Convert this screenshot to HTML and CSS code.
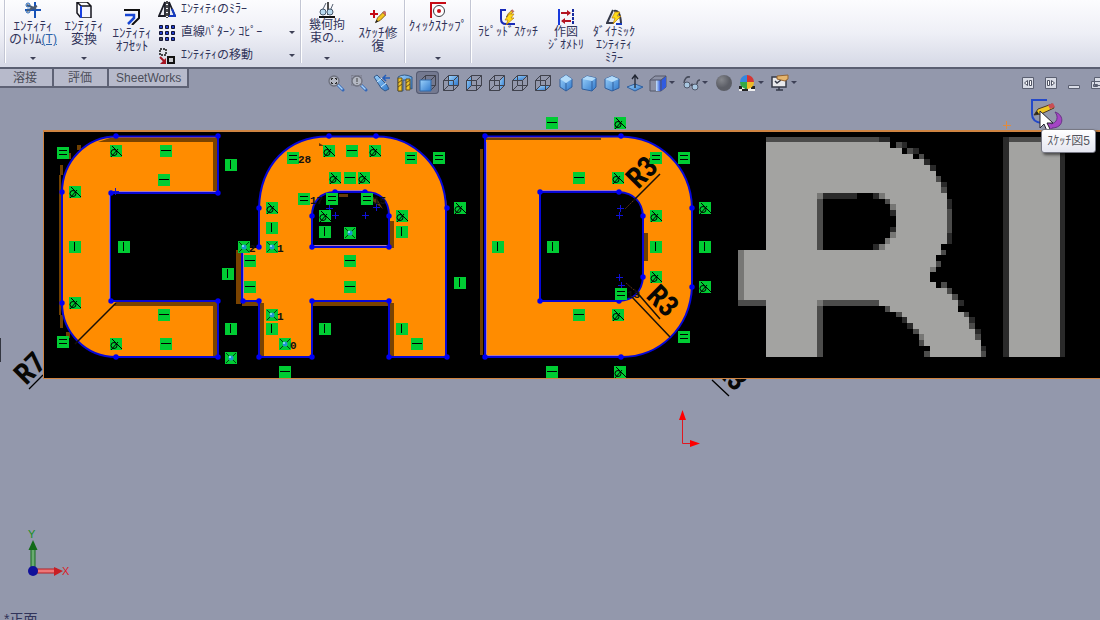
FILE: index.html
```html
<!DOCTYPE html>
<html lang="ja">
<head>
<meta charset="utf-8">
<title>スケッチ</title>
<link rel="stylesheet" href="styles.css">
</head>
<body>
<svg class="defs" aria-hidden="true">
  <defs>
    <linearGradient id="blue" x1="0" y1="0" x2="1" y2="1"><stop offset="0" stop-color="#9cd2fb"/><stop offset="1" stop-color="#2f78cc"/></linearGradient>
    <linearGradient id="shine" x1="0" x2="1"><stop offset="0" stop-color="#c8e4fb"/><stop offset="1" stop-color="#1c48d8"/></linearGradient>
    <radialGradient id="ball" cx=".35" cy=".3"><stop offset="0" stop-color="#85878d"/><stop offset="1" stop-color="#5c5e66"/></radialGradient>
    <symbol id="wire" viewBox="0 0 18 18"><path d="M1.500 6.500h10v10h-10zM6.500 1.500h10v10h-10zM1.500 6.500l5-5M11.500 6.500l5-5M1.500 16.500l5-5M11.500 16.500l5-5" fill="none" stroke="#40424d"/></symbol>
    <symbol id="lens" viewBox="0 0 18 18"><path d="M11 11l5 5" stroke="#3568b8" stroke-width="3" stroke-linecap="round"/><path d="M11 11l4 4" stroke="#a9d4fa" stroke-width="1.500" stroke-linecap="round"/><circle cx="7" cy="7" r="5" fill="#b4b8c3" stroke="#6c6f7c" stroke-width="1.300"/></symbol>
    <symbol id="pencil" viewBox="0 0 16 16"><path d="M2 14l2-5 7-7 3 3-7 7z" fill="#f4c61c" stroke="#71501c"/><path d="M10 3l2-2 3 3-2 2z" fill="#d66b63" stroke="#7b3433" stroke-width=".5"/><path d="M1 15l2-4 2 2z" fill="#222"/></symbol>
    <g id="h"><path d="M-6-6H6V6H-6z" fill="#00cc33"/><path d="M-5-.5H5" stroke="#000"/></g>
    <g id="v"><path d="M-6-6H6V6H-6z" fill="#00cc33"/><path d="M-.5-5V4" stroke="#000"/></g>
    <g id="e"><path d="M-6-6H6V6H-6z" fill="#00cc33"/><path d="M-4-2.500H4M-4 1.500H4" stroke="#000"/></g>
    <g id="t"><path d="M-6-6H6V6H-6z" fill="#00cc33"/><circle cx="-2" cy="1.500" r="3" fill="none" stroke="#000"/><path d="M-4-5L6 5M-5 6L2-2" stroke="#000"/></g>
    <g id="c"><path d="M-6-6H6V6H-6z" fill="#00cc33"/><path d="M-5-5L5 5M5-5L-5 5" stroke="#043b16"/><circle r="2.500" fill="#2094d2"/><circle cx="-1" cy="-1" r="1" fill="#9de6ff"/></g>
    <path id="x" d="M-3 .5H4M.5-3V4" stroke="#1010d8"/>
    <circle id="p" r="2.700" fill="#0000f4"/>
  </defs>
</svg>

<header class="ribbon">
  <i class="rule"></i>
  <button class="tool menu trim large"><svg viewBox="0 0 16 16"><path d="M0 8h16M10 0v16" stroke="#1752b8" stroke-width="2"/><path d="M2 3l9 4M2 9l10-5" stroke="#4b5a70" stroke-width="2"/><circle cx="3" cy="3" r="2" fill="none" stroke="#2364b5"/><circle cx="3" cy="9" r="2" fill="none" stroke="#2364b5"/></svg><span>ｴﾝﾃｨﾃｨ<br>のﾄﾘﾑ<u>(T)</u></span><b class="arrow"></b></button>
  <button class="tool menu large"><svg viewBox="0 0 16 16"><path d="M5 4h10v12H5z" fill="#f3f4ff"/><path d="M1 0h10l4 4v12H5L1 11zM1 0l4 4h10M5 4v12" fill="none" stroke="#15151c" stroke-width="1.500"/><path d="M5 4v12" stroke="#173ee0" stroke-width="2"/></svg><span>ｴﾝﾃｨﾃｨ<br>変換</span><b class="arrow"></b></button>
  <button class="tool large"><svg viewBox="0 0 16 16"><path d="M0 1h15v8l-7 7" fill="none" stroke="#111" stroke-width="2"/><path d="M1 6h9v3l-6 6" fill="none" stroke="#1746d4" stroke-width="2.500"/></svg><span>ｴﾝﾃｨﾃｨ<br>ｵﾌｾｯﾄ</span></button>
  <div class="list">
    <button class="row"><svg viewBox="0 0 18 18"><path d="M7 1L1 15h6zM11 1l6 14h-6z" fill="#e8eaf2" stroke="#1a1c26" stroke-width="1.800"/><path d="M11 15h6L14 8" fill="none" stroke="#153ac1" stroke-width="2"/><path d="M9 0v17" stroke="#111" stroke-width="1.500" stroke-dasharray="3 1"/></svg><span>ｴﾝﾃｨﾃｨのﾐﾗｰ</span></button>
    <button class="row"><svg viewBox="0 0 18 18"><g fill="#223dce" stroke="#111536"><path d="M1.500 1.500h3v3h-3zM7.500 1.500h3v3h-3zM13.500 1.500h3v3h-3zM1.500 7.500h3v3h-3zM7.500 7.500h3v3h-3zM13.500 7.500h3v3h-3zM7.500 13.500h3v3h-3zM13.500 13.500h3v3h-3z"/><path fill="#444" d="M1.500 13.500h3v3h-3z"/></g></svg><span>直線ﾊﾟﾀｰﾝ ｺﾋﾟｰ</span><b class="arrow"></b></button>
    <button class="row"><svg viewBox="0 0 18 18"><path d="M2 2h6v6H2z" fill="none" stroke="#111" stroke-width="1.500" stroke-dasharray="2 1"/><path d="M10 10h6v6h-6z" fill="#c9c9ce" stroke="#111" stroke-width="2"/><path d="M2 10l4 4" stroke="#a41522" stroke-width="2"/><path d="M8 11v6H2z" fill="#a41522"/></svg><span>ｴﾝﾃｨﾃｨの移動</span><b class="arrow"></b></button>
  </div>
  <i class="rule"></i>
  <button class="tool menu relations"><svg viewBox="0 0 16 16"><path d="M0 15h16" stroke="#111" stroke-width="2"/><path d="M9 0v13" stroke="#111" stroke-width="1.500"/><path d="M3 9l4-8M11 9l3-7" stroke="#555f70" fill="none"/><circle cx="4" cy="10" r="3" fill="#b9d9ef" stroke="#45566a"/><circle cx="11" cy="10" r="3" fill="#b9d9ef" stroke="#45566a"/></svg><span>幾何拘<br>束の...</span><b class="arrow"></b></button>
  <button class="tool repair large"><svg viewBox="0 0 16 16"><path d="M0 5h8M4 1v8" stroke="#c40915" stroke-width="2"/><use href="#pencil" x="4" y="0" width="14" height="16"/></svg><span>ｽｹｯﾁ修<br>復</span></button>
  <i class="rule"></i>
  <button class="tool menu snap large"><svg viewBox="0 0 16 16"><path d="M1 16V1h15" fill="none" stroke="#c60b16" stroke-width="2"/><circle cx="9" cy="9" r="5.500" fill="#fff" stroke="#3d3d46"/><circle cx="9" cy="9" r="2" fill="#c60b16"/></svg><span>ｸｨｯｸｽﾅｯﾌﾟ</span><b class="arrow"></b></button>
  <i class="rule"></i>
  <button class="tool rapid"><svg viewBox="0 0 16 16"><path d="M6 1H1v9q0 5 5 5h9" fill="none" stroke="#1829b8" stroke-width="2"/><use href="#pencil" x="4" y="0" width="12" height="9"/><path d="M9 5h5l-3 4h3l-8 7 2-5H5z" fill="#ffda19" stroke="#b87c08" stroke-width=".7"/></svg><span>ﾗﾋﾟｯﾄﾞｽｹｯﾁ</span></button>
  <button class="tool geometry"><svg viewBox="0 0 16 16"><path d="M1 0v16" stroke="#1839dc" stroke-width="2"/><path d="M15 0v16" stroke="#172ba0" stroke-width="2" stroke-dasharray="3 1"/><path d="M3 4h9M4 12h9" stroke="#b31320" stroke-width="2"/><path d="M9 1l4 3-4 3zM7 9l-4 3 4 3z" fill="#b31320"/></svg><span>作図<br>ｼﾞｵﾒﾄﾘ</span></button>
  <button class="tool dynamic"><svg viewBox="0 0 16 16"><path d="M7 1L1 14h7M8 2q6-2 7 12" fill="#e6e7ef" stroke="#343848" stroke-width="2"/><path d="M10 15h6" stroke="#163ac0" stroke-width="2"/><path d="M9 3h5l-3 4h4l-8 8 2-6H6z" fill="#ffdc19" stroke="#b87c08" stroke-width=".7"/></svg><span>ﾀﾞｲﾅﾐｯｸ<br>ｴﾝﾃｨﾃｨ<br>ﾐﾗｰ</span></button>
</header>

<div class="bar">
  <nav class="tabs"><a href="#weld">溶接</a><a href="#evaluate">評価</a><a href="#sheetworks">SheetWorks</a></nav>
  <div class="views">
    <button aria-label="全体表示"><svg viewBox="0 0 18 18"><use href="#lens"/><path d="M4.500 6V4.500H6M8 4.500h1.500V6M9.500 8v1.500H8M6 9.500H4.500V8" fill="none" stroke="#222"/></svg></button>
    <button aria-label="一部拡大"><svg viewBox="0 0 18 18"><use href="#lens"/><path d="M1.500 1.500h10v10h-10z" fill="none" stroke="#7a7d8c" stroke-dasharray="2 1"/><path d="M7 4v4M7 9v1" stroke="#444"/></svg></button>
    <button aria-label="前のビュー"><svg viewBox="0 0 18 18"><path d="M1 3l3-2 10 10 2 4-4 2-4-3z" fill="url(#blue)" stroke="#335889"/><path d="M4 8l5-4M8 13l5-4" stroke="#d0eaff"/><path d="M17 4h-6M13 1l-3 3 3 3" stroke="#245eba" fill="none" stroke-width="1.500"/></svg></button>
    <button aria-label="断面表示"><svg viewBox="0 0 18 18"><path d="M2 3q6-4 14 0v12l-4-2V6H7v11H2z" fill="url(#blue)" stroke="#315985"/><path d="M2 4h4v13H2zM10 5h4v11h-4z" fill="#efc52a" stroke="#68501c"/><path d="M2 9l4-3M2 13l4-3M10 9l4-3M10 13l4-3" stroke="#68501c"/></svg></button>
    <button class="on" aria-label="正面"><svg viewBox="0 0 18 18"><use href="#wire"/><path d="M1 6h11v11H1z" fill="url(#blue)" stroke="#326baa"/></svg></button>
    <button aria-label="背面"><svg viewBox="0 0 18 18"><path d="M7 2h9v9H7z" fill="url(#blue)"/><use href="#wire"/></svg></button>
    <button aria-label="左側面"><svg viewBox="0 0 18 18"><path d="M2 7l5-5v9l-5 5z" fill="url(#blue)"/><use href="#wire"/></svg></button>
    <button aria-label="右側面"><svg viewBox="0 0 18 18"><path d="M12 7l4-5v9l-4 5z" fill="url(#blue)"/><use href="#wire"/></svg></button>
    <button aria-label="平面"><svg viewBox="0 0 18 18"><path d="M2 6l5-4h9l-5 4z" fill="url(#blue)"/><use href="#wire"/></svg></button>
    <button aria-label="底面"><svg viewBox="0 0 18 18"><path d="M2 16l5-4h9l-5 4z" fill="url(#blue)"/><use href="#wire"/></svg></button>
    <button aria-label="等角投影"><svg viewBox="0 0 18 18"><path d="M9 1l6 4v8l-6 4-6-4V5z" fill="url(#blue)" stroke="#315f9d"/><path d="M9 1l6 4-6 4-6-4z" fill="#b2dbfa"/><path d="M9 9v8" stroke="#315f9d"/></svg></button>
    <button aria-label="不等角投影"><svg viewBox="0 0 18 18"><path d="M2 5l5-3 9 2v9l-4 4-10-2z" fill="url(#blue)" stroke="#315f9d"/><path d="M2 5l5-3 9 2-4 3z" fill="#b2dbfa"/><path d="M12 7v10" stroke="#315f9d"/></svg></button>
    <button aria-label="両等角投影"><svg viewBox="0 0 18 18"><path d="M2 5l7-3 7 3v9l-7 3-7-3z" fill="url(#blue)" stroke="#315f9d"/><path d="M2 5l7-3 7 3-7 3z" fill="#b2dbfa"/><path d="M10 8v9" stroke="#315f9d"/></svg></button>
    <button aria-label="選択アイテムに垂直"><svg viewBox="0 0 18 18"><path d="M1 13l8-3 8 3-8 4z" fill="url(#blue)" stroke="#315f9d"/><path d="M9 14V2M6 5l3-4 3 4" fill="none" stroke="#202532" stroke-width="1.300"/></svg></button>
    <button class="drop" aria-label="表示方向"><svg viewBox="0 0 18 18"><path d="M1 6l5-4h11v11l-5 4H1z" fill="#8c91a5" stroke="#555969"/><path d="M7 6h5v11H7z" fill="url(#shine)"/><path d="M12 6l5-4v11l-5 4z" fill="#305be0"/><path d="M1 6h11v11M12 6l5-4" fill="none" stroke="#50556a"/></svg><b class="arrow"></b></button>
    <button class="drop" aria-label="アイテムを表示"><svg viewBox="0 0 18 18"><path d="M2 9q1-7 6-6M9 12q1-3 2-1M15 10q0-4 3-4" fill="none" stroke="#464b5a" stroke-width="1.500"/><circle cx="5" cy="11" r="3" fill="#a8c7e1" stroke="#50576a"/><circle cx="13" cy="13" r="3" fill="#a8c7e1" stroke="#50576a"/></svg><b class="arrow"></b></button>
    <button aria-label="シーン"><svg viewBox="0 0 18 18"><circle cx="9" cy="9" r="8" fill="url(#ball)"/></svg></button>
    <button class="drop" aria-label="外観"><svg viewBox="0 0 18 18"><path d="M1 12h16v5H1z" fill="#eee"/><path d="M1 12h3v3H1zM7 14h3v3H7zM13 12h4v3h-4zM4 15h3v2H4z" fill="#222"/><path d="M9 1a7 7 0 0 0-7 7h7z" fill="#3487df"/><path d="M9 1a7 7 0 0 1 7 7H9z" fill="#d43634"/><path d="M2 8a7 7 0 0 0 7 7V8z" fill="#35a847"/><path d="M16 8a7 7 0 0 1-7 7V8z" fill="#edba26"/></svg><b class="arrow"></b></button>
    <button class="drop" aria-label="表示設定"><svg viewBox="0 0 18 18"><path d="M1 3h14v10H1z" fill="#e8e9ec" stroke="#363a47" stroke-width="1.500"/><path d="M4 7l2 2 4-3M5 16h7M8 13v3" fill="none" stroke="#343948" stroke-width="1.500"/><path d="M6 2l11-1v4l-3 2-8-2z" fill="#e5b56d" stroke="#936433"/></svg><b class="arrow"></b></button>
  </div>
  <div class="window">
    <button aria-label="左へ"><svg viewBox="0 0 14 14"><path class="box" d="M1.500 1.500h11v11h-11z"/><path d="M6.500 4.500L3.500 7l3 2.500zM8.500 4.500h2v5h-2z" fill="#fff" stroke="#4f5363"/></svg></button>
    <button aria-label="右へ"><svg viewBox="0 0 14 14"><path class="box" d="M1.500 1.500h11v11h-11z"/><path d="M7.500 4.500l3 2.500-3 2.500zM3.500 4.500h2v5h-2z" fill="#fff" stroke="#4f5363"/></svg></button>
    <button aria-label="最小化"><svg viewBox="0 0 14 14"><path class="box" d="M1.500 9.500h11v3h-11z"/></svg></button>
    <button aria-label="元に戻す"><svg viewBox="0 0 14 14"><path class="box" d="M4.500 1.500h9v8h-9zM1.500 5.500h9v7h-9zM3.500 8.500h4v2h-4z"/></svg></button>
  </div>
</div>

<main class="canvas">
<svg class="drawing" role="img" aria-label="CADRI スケッチ">
<g transform="translate(0 -96)">
  <g class="dimension"><text transform="translate(26 386) rotate(-45)">R7</text><text transform="translate(714 371) rotate(45)">R3</text></g>
  <path d="M29 389l14-14M712 380l17 16" stroke="#000" stroke-width="1.300"/>
  <path d="M0 338h1v24H0z" fill="#333640"/>
  <path d="M43.500 131.500H1110V378.500H43.500z" fill="#000" stroke="#cf8442"/>
  <path d="M43 130.500H1110" stroke="#cf8442"/>

  <path class="orange" d="M218 136H116A54 56 0 0 0 62 192V303A54 54 0 0 0 116 357H218V301H110V193H218Z"/>
  <path d="M110 138H217V192H213V142H98zM116 302H217V356H213V306H114z" fill="#7a4300"/>
  <path d="M59 175h2v140h-2zM60 165h3v10h-3zM67 153h4v6h-4zM77 145h4v5h-4zM60 315h3v13h-3zM66 332h4v6h-4z" fill="#704000"/>
  <path class="orange" fill-rule="evenodd" d="M242 248H259V208C260 166 287 136 329 136H376C415 136 445 168 447 208V357H389V301H312V357H259V301H242ZM312 247H389V216C389 200 380 192 365 192H335C321 192 312 201 312 216Z"/>
  <path d="M236 250h5v54h-5zM242 302h17v4h-17zM260 303h4v53h-4zM312 302h77v4h-77zM389 303h5v53h-5zM390 221h4v27h-4z" fill="#7a4300"/>
  <path class="orange" fill-rule="evenodd" d="M485 136H621C659 137 691 166 692 208V287C690 328 660 357 621 357H485ZM540 192H619C634 193 642 202 643 216V277C642 292 633 300 619 301H540Z"/>
  <path d="M486 138h115v2H486zM480 149h3v206h-3zM644 233h4v28h-4zM603 355h18v2h-18z" fill="#704000"/>
  <path d="M319 143l5 3h-5zM339 194h9v3h-9zM364 193l13 6 6 10-9-7zM649 158h2v4h-2z" fill="#653b0c"/>

  <g class="outline">
    <path d="M218 136.500H116A54 56 0 0 0 62 192V303A54 54 0 0 0 116 357H218V301H110V193H218Z"/>
    <path d="M242 248V301H259V357H312V301H389V357H446V208C445 168 415 136 376 136.500H329C287 136 260 166 259 208V247"/>
    <path d="M312 247H389V216C389 200 380 192 365 192H335C321 192 312 201 312 216Z"/>
    <path d="M485 136.500H621C659 137 691 166 692 208V287C690 328 660 357 621 357H485Z"/>
    <path d="M540 192H619C634 193 642 202 643 216V277C642 292 633 300 619 301H540Z"/>
  </g>
  <path d="M114 191.500H217M109.500 195V299M313 245.500h75M336 190.500h29M486 355.500h134M541 190.500h77M243.500 252v48M486.500 142v212" stroke="#ae79b1" fill="none"/>
  <g>
    <use href="#p" x="116" y="136"/><use href="#p" x="218" y="136"/><use href="#p" x="62" y="192"/><use href="#p" x="111" y="193"/><use href="#p" x="218" y="193"/><use href="#p" x="111" y="301"/><use href="#p" x="218" y="301"/><use href="#p" x="62" y="303"/><use href="#p" x="116" y="357"/><use href="#p" x="218" y="357"/>
    <use href="#p" x="329" y="136"/><use href="#p" x="376" y="136"/><use href="#p" x="259" y="208"/><use href="#p" x="447" y="208"/><use href="#p" x="335" y="192"/><use href="#p" x="365" y="192"/><use href="#p" x="312" y="216"/><use href="#p" x="389" y="216"/><use href="#p" x="312" y="247"/><use href="#p" x="389" y="247"/><use href="#p" x="259" y="247"/><use href="#p" x="243" y="301"/><use href="#p" x="259" y="301"/><use href="#p" x="312" y="301"/><use href="#p" x="389" y="301"/><use href="#p" x="259" y="357"/><use href="#p" x="312" y="357"/><use href="#p" x="389" y="357"/><use href="#p" x="447" y="357"/>
    <use href="#p" x="485" y="136"/><use href="#p" x="621" y="136"/><use href="#p" x="692" y="208"/><use href="#p" x="692" y="287"/><use href="#p" x="485" y="357"/><use href="#p" x="621" y="357"/><use href="#p" x="540" y="192"/><use href="#p" x="619" y="192"/><use href="#p" x="643" y="216"/><use href="#p" x="643" y="277"/><use href="#p" x="540" y="301"/><use href="#p" x="619" y="301"/>
    <use href="#x" x="115" y="191"/><use href="#x" x="329" y="208"/><use href="#x" x="335" y="215"/><use href="#x" x="365" y="215"/><use href="#x" x="376" y="207"/><use href="#x" x="620" y="208"/><use href="#x" x="619" y="215"/><use href="#x" x="619" y="277"/><use href="#x" x="621" y="285"/>
  </g>
  <path d="M116 303L75 344M660 174l-27 27M634 289l26 30M632 297l38 40" stroke="#171008" stroke-width="1.500"/>
  <path d="M633 201l-8 8M626 283l8 7" stroke="#5c3518" stroke-dasharray="2 1"/>
  <g class="dimension"><text transform="translate(638 190) rotate(-45)">R3</text><text transform="translate(645 297) rotate(45)">R3</text></g>

  <g>
    <use href="#e" x="63" y="153"/><use href="#t" x="116" y="151"/><use href="#h" x="166" y="151"/><use href="#v" x="231" y="165"/><use href="#h" x="164" y="180"/><use href="#t" x="75" y="192"/><use href="#v" x="75" y="247"/><use href="#v" x="124" y="247"/><use href="#v" x="228" y="274"/><use href="#t" x="75" y="303"/><use href="#e" x="63" y="342"/><use href="#h" x="164" y="315"/><use href="#t" x="116" y="344"/><use href="#h" x="166" y="344"/><use href="#v" x="231" y="329"/><use href="#c" x="231" y="358"/>
    <use href="#e" x="293" y="158"/><use href="#t" x="329" y="151"/><use href="#h" x="352" y="151"/><use href="#t" x="375" y="151"/><use href="#e" x="411" y="158"/><use href="#e" x="439" y="158"/><use href="#t" x="335" y="178"/><use href="#h" x="350" y="178"/><use href="#t" x="364" y="178"/><use href="#e" x="304" y="199"/><use href="#e" x="332" y="199"/><use href="#e" x="367" y="199"/><use href="#t" x="272" y="208"/><use href="#t" x="325" y="216"/><use href="#t" x="402" y="216"/><use href="#t" x="460" y="208"/><use href="#v" x="272" y="228"/><use href="#v" x="325" y="232"/><use href="#c" x="350" y="233"/><use href="#v" x="402" y="232"/><use href="#c" x="244" y="247"/><use href="#c" x="272" y="247"/><use href="#h" x="250" y="261"/><use href="#h" x="350" y="261"/><use href="#h" x="250" y="287"/><use href="#h" x="350" y="287"/><use href="#v" x="460" y="283"/><use href="#c" x="272" y="315"/><use href="#v" x="272" y="329"/><use href="#v" x="325" y="329"/><use href="#v" x="402" y="329"/><use href="#c" x="285" y="344"/><use href="#h" x="417" y="344"/><use href="#h" x="285" y="372"/>
    <use href="#h" x="552" y="123"/><use href="#t" x="620" y="123"/><use href="#e" x="656" y="158"/><use href="#e" x="684" y="158"/><use href="#h" x="579" y="178"/><use href="#t" x="618" y="178"/><use href="#v" x="498" y="247"/><use href="#v" x="553" y="247"/><use href="#t" x="656" y="216"/><use href="#v" x="656" y="247"/><use href="#t" x="656" y="277"/><use href="#t" x="705" y="208"/><use href="#v" x="705" y="247"/><use href="#t" x="705" y="287"/><use href="#e" x="621" y="294"/><use href="#h" x="579" y="315"/><use href="#t" x="618" y="315"/><use href="#e" x="684" y="337"/><use href="#h" x="552" y="372"/><use href="#t" x="620" y="372"/>
  </g>
  <g class="count"><text x="298" y="163">28</text><text x="310" y="204">17</text><text x="373" y="204">15</text><text x="249" y="252">2</text><text x="277" y="252">1</text><text x="277" y="320">1</text><text x="290" y="349">0</text><text x="627" y="298">13</text></g>

  <g transform="translate(720 120) scale(.33333)" shape-rendering="crispEdges">
    <path fill="#4c4c4b" d="M138 51H476V66H138zM54 390H72V558H54zM54 541H138V558H54zM291 541H476V558H309V711H291zM528 66h17v17h-17zM560 83h18v18h-18zM597 101h16v16h-16zM648 168h15v17h-15zM663 201h18v18h-18zM681 266h15v74h-15zM663 390h15v15h-15zM648 423h15v17h-15zM663 487h18v18h-18zM681 505h16v18h-16zM697 523h18v18h-18zM732 575h16v17h-16zM748 609h17v17h-17zM765 643h18v17h-18zM783 694h15v17h-15zM495 558h17v17h-17zM528 575h17v17h-17zM579 626h18v17h-18zM597 660h15v18h-15zM612 694h18v17h-18z"/>
    <path fill="#a3a3a1" fill-rule="evenodd" d="M138 66H510V83H545V101H578V117H613V134H630V152H648V185H663V219H681V373H663V405H648V440H630V487H648V505H681V523H697V541H715V575H732V592H748V626H765V660H783V711H630V678H612V643H597V626H579V609H561V592H545V575H510V558H476V541H291V711H138V541H72V390H138ZM291 219V390H495V372H510V354H528V252H510V236H495V219Z"/>
    <path fill="#777775" d="M54 390h18v151H54zM291 219h18v17h-18zM476 219h19v17h-19zM510 252h18v18h-18zM510 336h18v18h-18zM495 354h15v18h-15zM476 372h19v18h-19zM291 541h18v17h-18zM597 643h15v17h-15zM630 440h18v17h-18z"/>
    <path fill="#4c4c4b" d="M291 236h18v154h-18zM495 236h15v16h-15zM867 51h168v15H867z"/>
    <path fill="#2a2a2a" d="M309 219h102v17H309zM459 219h17v17h-17zM510 270h18v18h-18zM510 321h18v15h-18zM459 372h17v18h-17zM476 51h34v15h-34zM545 66h15v17h-15zM578 83h19v18h-19zM613 117h17v17h-17zM630 134h18v18h-18zM663 185h18v16h-18zM681 236h15v30h-15zM681 340h15v33h-15zM715 541h17v17h-17zM748 592h17v17h-17zM765 626h18v17h-18zM783 678h15v16h-15zM545 592h16v17h-16zM561 609h18v17h-18zM849 51h18v660h-18zM1020 66h15v645h-15z"/>
    <path fill="#a3a3a1" d="M867 66h153v645H867z"/>
  </g>

  <path d="M682.500 418V443.500H692" fill="none" stroke="#e01820"/><path d="M679 420h7l-3.500-10zM690 440v7l10-3.500z" fill="#f00"/>
  <path d="M1003 125.500h8M1006.500 121v8" stroke="#e28b3c"/>

  <path d="M31 548h4v20h-4z" fill="#69aa70" stroke="#176b20"/><path d="M28.500 550h9L33 540z" fill="#126a17"/>
  <path d="M37 569h20v4H37z" fill="#ee7778" stroke="#b22027"/><path d="M54 567v9l9-5z" fill="#c81e24"/>
  <circle cx="33" cy="571" r="5" fill="#10109a"/>
  <g class="axis"><text x="28" y="538" fill="#189020">Y</text><text x="62" y="575" fill="#dc2027">X</text></g>

  <path d="M1047 100h-15v14q0 8 10 9" fill="none" stroke="#2449c9" stroke-width="2"/>
  <path d="M1055 112c10 3 9 16-3 16l-1 3-6-5 5-5 1 3c6-1 8-7 4-12z" fill="#a545c5" stroke="#673186"/>
  <path d="M1034 115l4-6 14-5 2 4-13 6z" fill="#f0c823" stroke="#4d3a22"/><path d="M1048 105l5-2 2 4-5 2z" fill="#c94e55"/><path d="M1034 115l3-4 2 3z" fill="#222"/>
  <path d="M1040 111v17l4-4 3 7 3-2-3-6h6z" fill="#fff" stroke="#25232e"/>
</g>
</svg>
<div class="tip" role="tooltip">ｽｹｯﾁ図5</div>
<div class="orientation">*正面</div>
</main>
</body>
</html>
```
FILE: styles.css
```css
* { box-sizing: border-box; }
body {
  margin: 0;
  height: 100vh;
  display: flex;
  flex-direction: column;
  overflow: hidden;
  background: #9398ac;
  color: #303359;
  font: 12px/13px "Liberation Sans", "Noto Sans CJK JP", sans-serif;
}
.defs { position: absolute; width: 0; height: 0; }
button {
  padding: 0;
  border: 0;
  background: none;
  color: inherit;
  font: inherit;
}
.ribbon {
  flex: none;
  display: flex;
  height: 69px;
  padding-left: 4px;
  background: linear-gradient(#fcfcfe, #eeeff6 50%, #d7dae7 96%);
  border-bottom: 2px solid #5a5f72;
}
.rule {
  width: 2px;
  margin-bottom: 4px;
  background: linear-gradient(90deg, #c3c6d4 50%, #fff 50%);
}
.tool {
  width: 48px;
  display: flex;
  flex-direction: column;
  align-items: center;
  padding: 9px 0 0;
  white-space: nowrap;
}
.tool svg { flex: none; width: 16px; height: 16px; margin-bottom: 1px; }
.tool.menu { padding: 2px 0 7px; }
.tool u { color: #2b62a8; font-size: 12px; }
.large { font-size: 13px; }
.trim { width: 54px; }
.relations { width: 50px; }
.repair, .dynamic { width: 52px; }
.snap { width: 64px; }
.rapid { width: 72px; }
.geometry { width: 44px; }
.arrow {
  border: 3px solid transparent;
  border-top-color: #3d4056;
  border-bottom: 0;
}
.menu .arrow { margin-top: auto; }
.list { width: 144px; display: flex; flex-direction: column; margin-top: -2px; }
.row {
  display: flex;
  align-items: center;
  gap: 5px;
  height: 23px;
  padding: 0 5px 0 2px;
  white-space: nowrap;
}
.row svg { width: 18px; height: 18px; }
.row .arrow { margin-left: auto; }

.bar { flex: none; display: flex; height: 27px; }
.tabs { display: flex; height: 19px; }
.tabs a {
  padding: 0 15px 0 14px;
  border: solid #5e6275;
  border-width: 0 2px 2px 0;
  background: #b7bacb;
  color: #4b4d59;
  line-height: 18px;
  text-decoration: none;
}
.tabs a:first-child { padding-left: 13px; }
.tabs a:last-child { padding: 0 6px 0 7px; }
.views { display: flex; align-items: center; margin-left: auto; }
.views button, .window button { width: 23px; height: 23px; display: grid; place-items: center; }
.views svg { width: 18px; height: 18px; }
.views .drop { width: 33px; grid-template-columns: 23px 6px; justify-content: start; }
.views .on { background: #747990; box-shadow: inset 0 0 0 1px #555a70; border-radius: 4px; }
.window { display: flex; align-items: center; margin: 0 -8px 0 215px; }
.window svg { width: 14px; height: 14px; }
.box { fill: #d9dce6; stroke: #5a5f70; }

.canvas { flex: 1; position: relative; min-height: 0; }
.drawing { display: block; width: 100%; height: 100%; }
.orange { fill: #ff8c00; }
.outline { fill: none; stroke: #0707d8; stroke-width: 2; }
.dimension { font: bold 29px "Liberation Sans Narrow", "Roboto Condensed", Roboto, sans-serif; fill: #080704; }
.count { font: bold 11px "Liberation Mono", monospace; fill: #111; }
.axis { font: 11px "Liberation Sans", sans-serif; }
.tip {
  position: absolute;
  top: 33px;
  right: 4px;
  padding: 4px 5px;
  border: 1px solid #777884;
  border-radius: 3px;
  background: linear-gradient(#fff, #e5e6f0);
  box-shadow: 2px 2px 3px #0008;
  color: #55565e;
  line-height: 14px;
}
.orientation {
  position: absolute;
  left: 4px;
  bottom: -8px;
  font-size: 14px;
  line-height: 18px;
}
```
